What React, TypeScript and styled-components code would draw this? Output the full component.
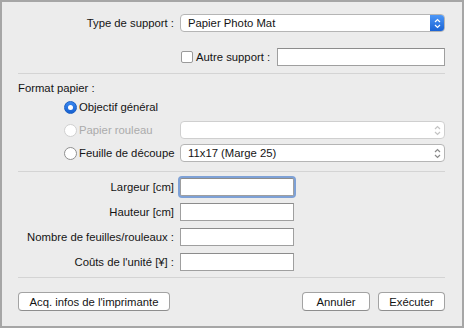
import React from "react";
import styled, { createGlobalStyle } from "styled-components";

const GlobalStyle = createGlobalStyle`
    html, body {
        margin: 0;
        padding: 0;
        background: #ececec;
    }
    body {
        font-family: "Liberation Sans", Arial, sans-serif;
        font-size: 11.3px;
        color: #141414;
    }
`

const Window = styled.div`
    box-sizing: border-box;
    width: 464px;
    height: 328px;
    border: 2px solid #a6a6a6;
    background: #ececec;
    padding: 12px 17px 0 16px;
    display: flex;
    flex-direction: column;
`

const Row = styled.div<{ $top?: number }>`
    display: grid;
    grid-template-columns: 158px 1fr;
    column-gap: 4px;
    align-items: center;
    margin-top: ${p => p.$top ?? 0}px;
`

const Label = styled.label`
    text-align: right;
    white-space: nowrap;
    padding-right: 2px;
`

const Separator = styled.hr<{ $top: number }>`
    border: 0;
    height: 1px;
    background: #d4d4d4;
    margin: ${p => p.$top}px 0 0 0;
`

const SectionTitle = styled.div`
    margin-top: 7px;
    line-height: 14px;
`

const SelectBox = styled.div<{ $disabled?: boolean }>`
    box-sizing: border-box;
    height: 18px;
    background: #fff;
    border: 1px solid ${p => p.$disabled ? "#cfcfcf" : "#b5b5b5"};
    border-radius: 4px;
    display: flex;
    align-items: center;
    padding-left: 7px;
    overflow: hidden;
    color: ${p => p.$disabled ? "#aaa" : "#141414"};
`

const SelectText = styled.span`
    flex: 1;
    white-space: nowrap;
`

const Stepper = styled.span<{ $blue?: boolean }>`
    width: 14px;
    height: 100%;
    display: flex;
    align-items: center;
    justify-content: center;
    background: ${p => p.$blue ? "linear-gradient(#4d97f7, #1a63d4)" : "transparent"};
`

const Chevrons = ({ color }: { color: string }) => (
    <svg width="7" height="11" viewBox="0 0 7 11">
        <path d="M1 4 L3.5 1.5 L6 4 M1 7 L3.5 9.5 L6 7" fill="none" stroke={color} strokeWidth="1.2" />
    </svg>
)

const Select = ({ value, disabled, blue }: { value?: string; disabled?: boolean; blue?: boolean }) => (
    <SelectBox $disabled={disabled}>
        <SelectText>{value}</SelectText>
        <Stepper $blue={blue}>
            <Chevrons color={blue ? "#fff" : disabled ? "#c4c4c4" : "#8a8a8a"} />
        </Stepper>
    </SelectBox>
)

const TextInput = styled.input<{ $focus?: boolean; $width?: number }>`
    box-sizing: border-box;
    height: 18px;
    width: ${p => p.$width ? `${p.$width}px` : "100%"};
    border: 1px solid #9f9f9f;
    border-top-color: #8c8c8c;
    background: #fff;
    outline: none;
    padding: 0 3px;
    font: inherit;
    box-shadow: ${p => p.$focus ? "0 0 0 2px #7ea1d6" : "none"};
    border-radius: ${p => p.$focus ? "2px" : "0"};
`

const CheckLine = styled.div`
    display: flex;
    align-items: center;
`

const Checkbox = styled.span`
    box-sizing: border-box;
    width: 12px;
    height: 12px;
    flex: none;
    background: #fff;
    border: 1px solid #9a9a9a;
    border-radius: 2px;
    margin: 0 3px 0 1px;
`

const CheckText = styled.span`
    white-space: nowrap;
    margin-right: 7px;
`

const RadioRow = styled.div<{ $top: number }>`
    display: grid;
    grid-template-columns: 112px 1fr;
    column-gap: 4px;
    align-items: center;
    margin: ${p => p.$top}px 0 0 46px;
    height: 18px;
`

const RadioLabel = styled.div<{ $disabled?: boolean }>`
    display: flex;
    align-items: center;
    white-space: nowrap;
    color: ${p => p.$disabled ? "#ababab" : "#141414"};
`

const RadioDot = styled.span<{ $checked?: boolean; $disabled?: boolean }>`
    box-sizing: border-box;
    width: 13px;
    height: 13px;
    border-radius: 50%;
    margin-right: 2px;
    flex: none;
    display: flex;
    align-items: center;
    justify-content: center;
    background: ${p => p.$checked ? "linear-gradient(#3b88f0, #1660d0)" : "#fff"};
    border: 1px solid ${p => p.$checked ? "#1a5fc4" : p.$disabled ? "#d0d0d0" : "#8f8f8f"};

    &::after {
        content: "";
        display: ${p => p.$checked ? "block" : "none"};
        width: 5px;
        height: 5px;
        border-radius: 50%;
        background: #fff;
    }
`

const Footer = styled.div`
    display: flex;
    align-items: center;
    margin-top: 14px;
`

const Button = styled.button<{ $width: number; $right?: number }>`
    box-sizing: border-box;
    height: 19px;
    width: ${p => p.$width}px;
    margin-right: ${p => p.$right ?? 0}px;
    background: #fff;
    border: 1px solid #a3a3a3;
    border-bottom-color: #8e8e8e;
    border-radius: 4px;
    font: inherit;
    color: #141414;
    padding: 0;
`

const Spacer = styled.div`
    flex: 1;
`

const fields = [
    { label: "Largeur [cm]", focus: true },
    { label: "Hauteur [cm]" },
    { label: "Nombre de feuilles/rouleaux :" },
    { label: "Coûts de l'unité [¥] :" },
]

export default function App() {
    return (
        <>
            <GlobalStyle />
            <Window>
                <Row>
                    <Label>Type de support :</Label>
                    <Select value="Papier Photo Mat" blue />
                </Row>
                <Row $top={16}>
                    <span />
                    <CheckLine>
                        <Checkbox />
                        <CheckText>Autre support :</CheckText>
                        <TextInput />
                    </CheckLine>
                </Row>
                <Separator $top={7} />

                <SectionTitle>Format papier :</SectionTitle>
                <RadioRow $top={3}>
                    <RadioLabel><RadioDot $checked />Objectif général</RadioLabel>
                </RadioRow>
                <RadioRow $top={5}>
                    <RadioLabel $disabled><RadioDot $disabled />Papier rouleau</RadioLabel>
                    <Select disabled />
                </RadioRow>
                <RadioRow $top={5}>
                    <RadioLabel><RadioDot />Feuille de découpe</RadioLabel>
                    <Select value="11x17 (Marge 25)" />
                </RadioRow>
                <Separator $top={9} />

                {fields.map((f, i) => (
                    <Row key={f.label} $top={i === 0 ? 6 : 7}>
                        <Label>{f.label}</Label>
                        <TextInput $width={114} $focus={f.focus} />
                    </Row>
                ))}
                <Separator $top={6} />

                <Footer>
                    <Button $width={152}>Acq. infos de l'imprimante</Button>
                    <Spacer />
                    <Button $width={68} $right={8}>Annuler</Button>
                    <Button $width={67}>Exécuter</Button>
                </Footer>
            </Window>
        </>
    )
}
